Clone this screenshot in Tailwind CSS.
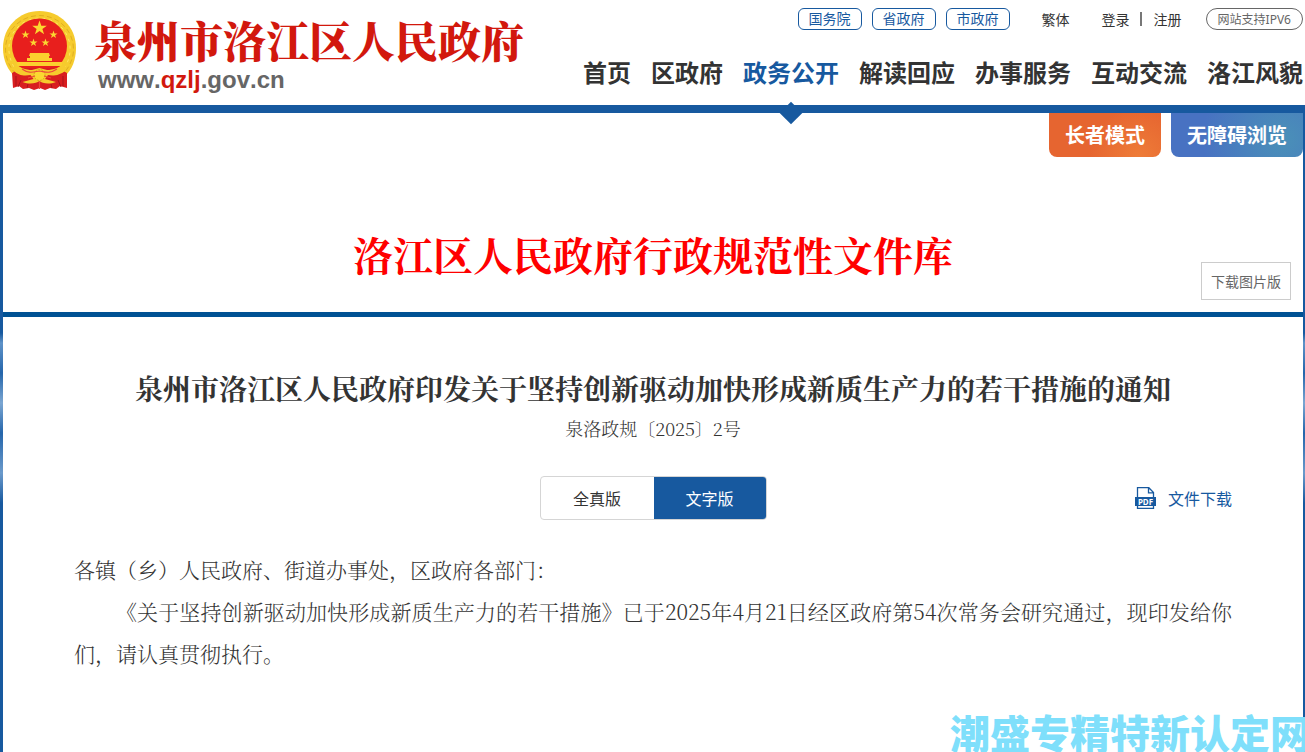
<!DOCTYPE html>
<html lang="zh-CN">
<head>
  <meta charset="UTF-8">
  <meta name="viewport" content="width=device-width, initial-scale=1.0">
  <title>泉州市洛江区人民政府</title>
  <script src="https://cdn.jsdelivr.net/npm/@tailwindcss/browser@4"></script>
</head>
<body class="relative min-h-screen flex flex-col overflow-x-hidden font-['Noto_Sans_CJK_SC',sans-serif] text-[#333] bg-[#17599f]">

  <header class="flex justify-between bg-white pr-0.5 border-b-8 border-[#17599f] h-[113px]">
    <!-- Logo -->
    <a href="#" class="flex">
      <svg class="w-20 h-[100px] shrink-0" viewBox="0 0 80 100" aria-hidden="true">
        <path fill="#f6cb2d" d="M39.5 11C19 11 3 27 3 48c0 13 5 22 12 29h49c8-7 12-17 12-29C76 27 60 11 39.5 11z" />
        <path fill="none" stroke="#dfae22" stroke-width="1" stroke-dasharray="5 3" d="M16 74C-6 51 9 16 39.500 15.500C70 16 85 51 63 74" />
        <path fill="none" stroke="#ffe566" stroke-width="1" stroke-dasharray="3 4" d="M14 67C1 45 14 19 39.500 18C65 19 78 45 65 67" />
        <circle cx="39.500" cy="46" r="27.500" fill="#e81f1d" />
        <path fill="#fbd831" d="M39.500 20.500l1.800 5.200h5.500l-4.400 3.300 1.700 5.300-4.600-3.200-4.600 3.200 1.700-5.300-4.400-3.300h5.500z" />
        <path fill="#fbd831" d="M25.500 30.500l1 2.900h3l-2.400 1.800.9 2.900-2.500-1.800-2.500 1.800.9-2.900-2.400-1.800h3zM53.500 30.500l1 2.900h3l-2.400 1.800.9 2.900-2.500-1.800-2.500 1.800.9-2.900-2.400-1.800h3zM33.500 38.500l1 2.900h3l-2.400 1.800.9 2.900-2.500-1.800-2.500 1.800.9-2.900-2.400-1.800h3zM45.500 38.500l1 2.900h3l-2.400 1.800.9 2.900-2.500-1.800-2.500 1.800.9-2.900-2.400-1.800h3z" />
        <path fill="#fbd02e" d="M30 53h19l1 3h-1v2h3v3h-25v-3h3v-2h-1zM17 62h45v4H17z" />
        <path fill="#e81f1d" d="M18 66h43l-5 3H23z" />
        <path fill="#d81e20" d="M12 73l9-5 37 0 9 5v15l-7-2-4 3-6-1-5 2-5-2-6 2-5-2-6 1-4-3-6 2z" />
        <path fill="#f6cb2d" d="M14 62c5 6 12 8 18 8l7.500-2 7.500 2c6 0 13-2 18-8l1 8c-6 6-14 6-18 5l-3 4 11 3c-8 3-14 1-16.500-1-3 2-9 4-17 1l11-3-3-4c-5 1-13 1-17-5z" />
        <circle cx="39.500" cy="75" r="5.500" fill="#fbd831" stroke="#d9a31c" stroke-dasharray="2 1" />
        <path fill="none" stroke="#ee4a3a" stroke-width="1.200" d="M22 69c7 5 11 3 17.500 2 6.500 1 10 3 17.500-2M28 78l7-2M51 78l-7-2M39.500 81v8" />
        <path fill="none" stroke="#a9131b" d="M16 76v10M21 80l-3 7M63 76v10M58 80l3 7M28 84l-1 4M51 84l1 4" />
      </svg>
      <div class="pl-3.5 pt-2.5">
        <div class="text-[43px] leading-[60px] font-black text-[#d2180d] font-['Noto_Serif_CJK_SC','Noto_Sans_CJK_SC',serif]">泉州市洛江区人民政府</div>
        <div class="pl-1 -mt-0.5 text-2xl leading-6 font-bold [font-kerning:none] text-[#666] font-['Liberation_Sans',sans-serif]">www.<span class="text-[#d2180d]">qzlj</span>.gov.cn</div>
      </div>
    </a>

    <div class="flex flex-col items-end pt-2">
      <!-- Top links -->
      <div class="flex items-center h-[22px] text-sm leading-[18px]">
        <div class="flex gap-2.5 text-[#17599f]">
          <a href="#" class="w-16 h-[22px] text-center border border-[#17599f] rounded-md">国务院</a>
          <a href="#" class="w-16 h-[22px] text-center border border-[#17599f] rounded-md">省政府</a>
          <a href="#" class="w-16 h-[22px] text-center border border-[#17599f] rounded-md">市政府</a>
        </div>
        <a href="#" class="ml-8">繁体</a>
        <a href="#" class="ml-8">登录</a>
        <span class="ml-2.5 mr-3 w-0.5 h-3.5 bg-[#777]"></span>
        <a href="#">注册</a>
        <a href="#" class="ml-6 h-[22px] px-[11px] text-xs leading-5 text-[#666] border border-[#666] rounded-full">网站支持<span class="font-['Noto_Sans',sans-serif]">IPV6</span></a>
      </div>

      <!-- Main nav -->
      <nav class="flex gap-5 mt-6 text-2xl leading-9 font-bold whitespace-nowrap">
        <a href="#">首页</a>
        <a href="#">区政府</a>
        <a href="#" class="relative text-[#17599f]">政务公开
          <span class="absolute left-1/2 top-[51px] w-4 h-4 -ml-2 rotate-45 bg-[#17599f]"></span>
        </a>
        <a href="#">解读回应</a>
        <a href="#">办事服务</a>
        <a href="#">互动交流</a>
        <a href="#">洛江风貌</a>
      </nav>
    </div>
  </header>

  <div class="flex-1 flex flex-col pl-[3px] pr-0.5 bg-[linear-gradient(#17599f_0px,#17599f_220px,#5f93c8_230px,#2566ab_260px,#7ba6d2_290px,#2566ab_320px,#6b9acb_360px,#17599f_390px)]">
    <main class="flex-1 bg-white">
      <!-- Library banner -->
      <section class="pb-3 border-b-[5px] border-[#005294]">
        <div class="flex justify-end gap-2.5 text-xl leading-[44px] font-bold text-white">
          <button type="button" class="px-4 rounded-b-lg bg-[radial-gradient(circle_at_80%_100%,#ee7c38,#e66530_50%)]">长者模式</button>
          <button type="button" class="px-4 rounded-b-lg bg-[radial-gradient(circle_at_85%_60%,#4a90b8,#4872c2_70%)]">无障碍浏览</button>
        </div>
        <div class="grid grid-cols-[1fr_auto_1fr] mt-[67px]">
          <h1 class="col-start-2 pb-4 text-[40px] leading-[60px] font-bold text-[#f00] font-['Noto_Serif_CJK_SC','Noto_Sans_CJK_SC',serif]">洛江区人民政府行政规范性文件库</h1>
          <button type="button" class="justify-self-end self-end mr-3 w-[90px] h-[38px] text-sm text-[#666] border border-[#ccc]">下载图片版</button>
        </div>
      </section>

      <!-- Document -->
      <article class="px-[71px] pt-[51px] pb-10 font-['Noto_Serif_CJK_SC','Noto_Sans_CJK_SC',serif]">
        <h2 class="text-[28px] leading-10 font-bold text-center">泉州市洛江区人民政府印发关于坚持创新驱动加快形成新质生产力的若干措施的通知</h2>
        <p class="text-lg leading-10 font-light text-center">泉洛政规〔2025〕2号</p>

        <div class="grid grid-cols-[1fr_auto_1fr] items-center mt-7 text-base font-['Noto_Sans_CJK_SC',sans-serif]">
          <div class="col-start-2 flex h-11 border border-[#d5d5d5] rounded overflow-hidden">
            <button type="button" class="w-[113px]">全真版</button>
            <button type="button" class="w-28 bg-[#17599f] text-white">文字版</button>
          </div>
          <a href="#" class="justify-self-end flex items-center gap-3 text-[#17599f]">
            <svg class="w-[21px] h-[22px]" viewBox="0 0 21 22" aria-hidden="true">
              <path fill="none" stroke="#17599f" stroke-width="1.300" d="M2.500 10V.7h11.300l4.700 4.800V10M13.500 1v4.800h4.700M2.500 18v3.300h16V18" />
              <path fill="#17599f" d="M0 10h21v9H0z" />
              <text x="10.500" y="17.500" text-anchor="middle" font-family="Noto Sans, sans-serif" font-size="8" font-weight="700" fill="#fff">PDF</text>
            </svg>
            文件下载
          </a>
        </div>

        <div class="mt-7 text-[21px] leading-[42px] font-light text-justify">
          <p>各镇（乡）人民政府、街道办事处，区政府各部门：</p>
          <p class="indent-[2em]">《关于坚持创新驱动加快形成新质生产力的若干措施》已于2025年4月21日经区政府第54次常务会研究通过，现印发给你们，请认真贯彻执行。</p>
        </div>
      </article>
    </main>
  </div>

  <!-- Site mark -->
  <div class="absolute right-0 bottom-0 w-[355px] h-10 overflow-hidden whitespace-nowrap text-[40px] leading-10 font-black text-[#7fdffb]">潮盛专精特新认定网</div>
</body>
</html>
